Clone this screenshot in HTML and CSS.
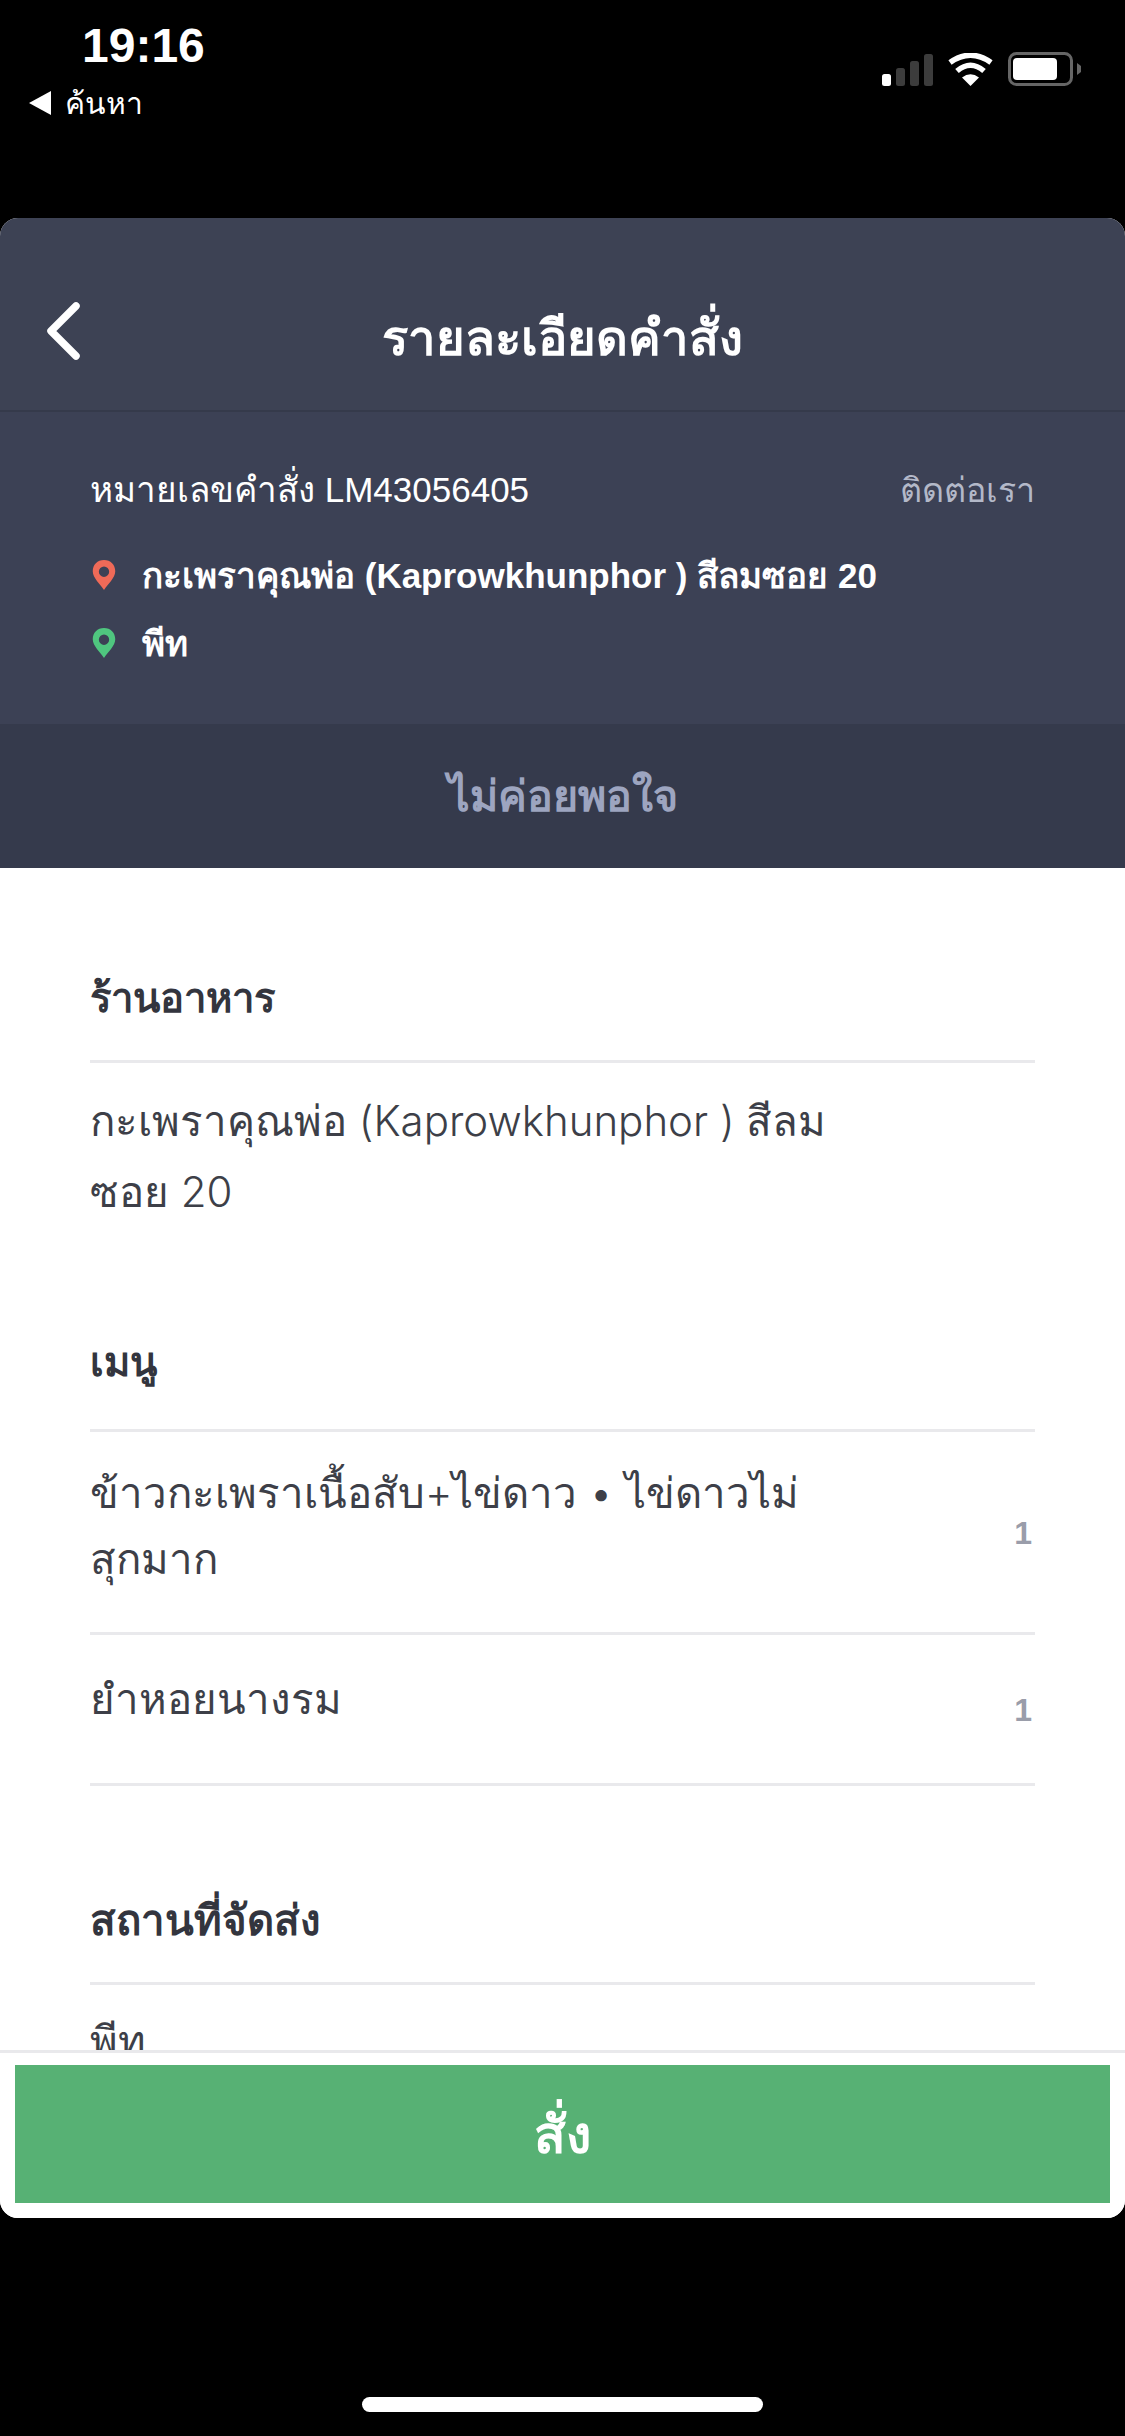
FILE: index.html
```html
<!DOCTYPE html>
<html lang="th">
<head>
<meta charset="utf-8">
<title>รายละเอียดคำสั่ง</title>
<link rel="stylesheet" href="styles.css">
</head>
<body>
<div class="screen">
  <header class="status">
    <div class="status-left">
      <div class="time">19:16</div>
      <div class="crumb"><svg class="crumb-arrow" viewBox="0 0 22 24"><path d="M22 0V24L0 12Z" fill="#fff"/></svg><span>ค้นหา</span></div>
    </div>
    <div class="status-right">
      <svg class="signal" viewBox="0 0 51 32"><rect x="0" y="20" width="9" height="12" rx="2.500" fill="#fff"/><rect x="14" y="14" width="9" height="18" rx="2.500" fill="#3c3c3c"/><rect x="28" y="7" width="9" height="25" rx="2.500" fill="#3c3c3c"/><rect x="42" y="0" width="9" height="32" rx="2.500" fill="#3c3c3c"/></svg>
      <svg class="wifi" viewBox="0 0 45 33"><path d="M22.500 33 14 24.500Q22.500 18 31 24.500Z" fill="#fff"/><path d="M9 18Q22.500 6.500 36 18" fill="none" stroke="#fff" stroke-width="5.500"/><path d="M2 9.500Q22.500 -5 43 9.500" fill="none" stroke="#fff" stroke-width="5.500"/></svg>
      <svg class="battery" viewBox="0 0 73 34"><rect x="1.500" y="1.500" width="62" height="31" rx="7" fill="none" stroke="#666" stroke-width="3"/><rect x="5" y="6" width="44" height="22" rx="4" fill="#fff"/><path d="M69 11 73 14V20L69 23Z" fill="#666"/></svg>
    </div>
  </header>

  <main class="card">
    <div class="topbar">
      <svg class="back" viewBox="0 0 36 58"><path d="M31 4 6 29 31 54" fill="none" stroke="#fff" stroke-width="7.500" stroke-linecap="round" stroke-linejoin="round"/></svg>
      <h1 class="title">รายละเอียดคำสั่ง</h1>
    </div>
    <section class="info">
      <div class="order-row"><span>หมายเลขคำสั่ง LM43056405</span><span class="contact">ติดต่อเรา</span></div>
      <div class="pin-row first"><svg class="pin" viewBox="0 0 24 32"><path fill-rule="evenodd" d="M12 0C5 0 0 5 0 12C0 19 8 26 12 32C16 26 24 19 24 12C24 5 19 0 12 0ZM12 7A5.500 5.500 0 1 1 12 18A5.500 5.500 0 1 1 12 7Z" fill="#ef6a58"/></svg><span>กะเพราคุณพ่อ (Kaprowkhunphor ) สีลมซอย 20</span></div>
      <div class="pin-row"><svg class="pin" viewBox="0 0 24 32"><path fill-rule="evenodd" d="M12 0C5 0 0 5 0 12C0 19 8 26 12 32C16 26 24 19 24 12C24 5 19 0 12 0ZM12 7A5.500 5.500 0 1 1 12 18A5.500 5.500 0 1 1 12 7Z" fill="#4fc67f"/></svg><span>พีท</span></div>
    </section>
    <div class="feedback">ไม่ค่อยพอใจ</div>
    <div class="content">
      <h2 class="heading h-shop">ร้านอาหาร</h2>
      <p class="text shop">กะเพราคุณพ่อ (Kaprowkhunphor ) สีลม<br>ซอย 20</p>
      <h2 class="heading h-menu">เมนู</h2>
      <div class="item item-a"><p class="text">ข้าวกะเพราเนื้อสับ+ไข่ดาว • ไข่ดาวไม่<br>สุกมาก</p><span class="qty qty-a">1</span></div>
      <div class="item item-b"><p class="text">ยำหอยนางรม</p><span class="qty qty-b">1</span></div>
      <h2 class="heading h-place">สถานที่จัดส่ง</h2>
      <p class="text place">พีท</p>
    </div>
    <footer class="footer"><button class="order">สั่ง</button></footer>
  </main>

  <div class="home-wrap"><div class="home"></div></div>
</div>
</body>
</html>
```
FILE: styles.css
```css
* { box-sizing: border-box; }
html, body { margin: 0; padding: 0; background: #000; }
body { font-family: "Liberation Sans", "Noto Sans", "Noto Sans CJK SC", sans-serif; color: #fff; }
.screen { width: 1125px; height: 2436px; display: flex; flex-direction: column; overflow: hidden; }

.status { height: 218px; flex: none; display: flex; justify-content: space-between; align-items: flex-start; padding: 21px 44px 0 29px; }
.status-left { display: flex; flex-direction: column; }
.time { font-size: 48px; font-weight: 700; line-height: 50px; margin-left: 53px; }
.crumb { display: flex; align-items: center; gap: 14px; font-size: 30px; line-height: 36px; margin-top: 15px; }
.crumb-arrow { width: 22px; height: 24px; margin-top: -3px; }
.status-right { display: flex; align-items: flex-end; gap: 15px; padding-top: 31px; }
.signal { width: 51px; height: 32px; }
.wifi { width: 45px; height: 33px; }
.battery { width: 73px; height: 34px; }

.card { flex: none; height: 2000px; border-radius: 18px; overflow: hidden; background: #fff; display: flex; flex-direction: column; }
.topbar { height: 194px; flex: none; background: #3d4254; border-bottom: 2px solid #353a4b; display: flex; align-items: center; justify-content: center; padding-top: 48px; position: relative; }
.back { position: absolute; left: 45px; top: 84px; width: 36px; height: 58px; }
.title { margin: 0; font-size: 49px; font-weight: 700; line-height: 60px; }

.info { height: 312px; flex: none; background: #3c4155; padding: 53px 90px 0; font-size: 35px; }
.order-row { display: flex; justify-content: space-between; line-height: 50px; }
.contact { color: #b3b8c8; font-size: 34px; }
.pin-row { display: flex; align-items: center; gap: 26px; font-weight: 700; line-height: 50px; margin-top: 18px; padding-left: 2px; }
.pin-row.first { margin-top: 36px; }
.pin { width: 24px; height: 30px; flex: none; margin-top: -2px; }

.feedback { height: 144px; flex: none; background: #353a4c; color: #9da5c0; font-size: 43px; font-weight: 700; display: flex; align-items: center; justify-content: center; }

.content { flex: 1; min-height: 0; overflow: hidden; padding: 0 90px; color: #3d3f48; }
.heading { margin: 0; font-size: 40px; font-weight: 700; line-height: 60px; border-bottom: 3px solid #e9e9ec; color: #33353e; }
.h-shop { padding: 100px 0 32px; }
.h-menu { padding: 0 0 37px; margin-top: 105px; }
.h-place { padding: 0 0 31px; margin-top: 105px; font-size: 42px; }
.text { margin: 0; font-family: Inter, "Liberation Sans", sans-serif; font-size: 42px; line-height: 71px; font-weight: 300; flex: 1; }
.shop { padding-top: 22px; }
.item { display: flex; justify-content: space-between; border-bottom: 3px solid #e9e9ec; }
.item-a { height: 203px; padding-top: 28px; }
.item-b { height: 151px; padding-top: 28px; }
.item-a .text { line-height: 66px; }
.qty { font-size: 32px; font-weight: 700; color: #9a9daa; line-height: 40px; padding-right: 3px; }
.qty-a { margin-top: 53px; }
.qty-b { margin-top: 27px; }
.place { padding-top: 20px; }

.footer { height: 168px; flex: none; background: #fff; border-top: 3px solid #e9e9ec; padding: 12px 15px 15px; }
.order { display: block; width: 100%; height: 138px; border: 0; background: #57b174; color: #fff; font-family: inherit; font-size: 52px; font-weight: 700; }

.home-wrap { flex: 1; display: flex; justify-content: center; padding-top: 179px; }
.home { width: 401px; height: 15px; border-radius: 8px; background: #fff; }
```
